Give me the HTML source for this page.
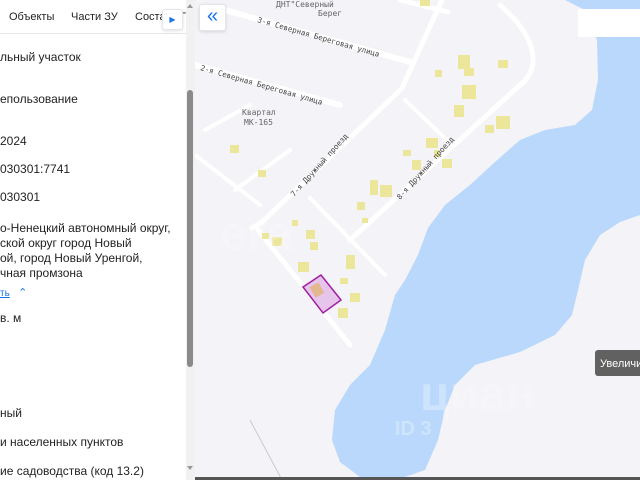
<!DOCTYPE html>
<html><head><meta charset="utf-8"><style>
*{margin:0;padding:0;box-sizing:border-box}
body{width:640px;height:480px;overflow:hidden;position:relative;background:#f3f3f8;font-family:"Liberation Sans",sans-serif}
#map{position:absolute;left:0;top:0}
#panel{position:absolute;left:0;top:0;width:186px;height:480px;background:#fff;overflow:hidden}
#tabs{height:34px;border-bottom:1px solid #e4e6ea;position:relative;font-size:11px;color:#222}
#tabs span{position:absolute;top:11px;white-space:nowrap}
.t{position:absolute;left:0;font-size:12px;color:#222;white-space:nowrap}
#sb{position:absolute;left:186px;top:0;width:9px;height:480px;background:#f1f1f1}
#thumb{position:absolute;left:187px;top:90px;width:6px;height:277px;background:#8a8a8a;border-radius:3px}
.btn{position:absolute;background:#fff;border:1px solid #e3e6ec;border-radius:3px;box-shadow:0 1px 3px rgba(0,0,0,.12)}
</style></head><body>
<svg id="map" width="640" height="480" viewBox="0 0 640 480">
<rect width="640" height="480" fill="#f3f3f8"/>
<polygon points="565,0 585,10 597,40 598,80 592,110 575,125 545,130 520,140 495,162 470,185 445,205 428,228 418,255 405,280 395,295 385,330 370,365 350,385 335,410 332,440 340,462 360,477 405,477 425,470 438,440 445,410 455,385 475,365 520,352 555,335 572,315 578,290 585,260 600,235 620,222 640,215 640,0" fill="#b9d8fb"/>
<g stroke="#fff" stroke-linecap="round" fill="none">
<path d="M225,10 L410,62" stroke-width="6"/>
<path d="M195,65 L340,105" stroke-width="6"/>
<path d="M400,0 L448,12" stroke-width="5"/>
<path d="M442,0 L402,88 L395,95" stroke-width="5"/>
<path d="M395,95 L262,222 L252,228" stroke-width="5"/>
<path d="M258,230 L350,345" stroke-width="5"/>
<path d="M500,5 C540,40 540,70 520,85 L350,240" stroke-width="5"/>
<path d="M405,100 L450,143" stroke-width="4"/>
<path d="M310,198 L385,275" stroke-width="4"/>
<path d="M195,155 L260,205" stroke-width="4"/>
<path d="M205,130 L250,105" stroke-width="4"/>
<path d="M235,190 L290,150" stroke-width="4"/>
</g>
<path d="M250,420 L282,480" stroke="#c8c8d0" stroke-width="1" fill="none"/>
<g fill="#ece69a">
<rect x="230" y="145" width="9" height="8"/><rect x="258" y="170" width="8" height="7"/>
<rect x="262" y="233" width="7" height="6"/><rect x="272" y="237" width="10" height="9"/><rect x="298" y="262" width="11" height="10"/>
<rect x="306" y="230" width="9" height="9"/><rect x="310" y="242" width="8" height="8"/><rect x="292" y="220" width="6" height="6"/>
<rect x="350" y="293" width="10" height="9"/><rect x="338" y="308" width="10" height="10"/><rect x="346" y="255" width="9" height="14"/><rect x="340" y="278" width="8" height="6"/>
<rect x="357" y="202" width="8" height="8"/><rect x="370" y="180" width="8" height="15"/><rect x="380" y="185" width="12" height="12"/>
<rect x="362" y="218" width="6" height="5"/><rect x="403" y="150" width="8" height="6"/><rect x="412" y="160" width="9" height="10"/><rect x="426" y="138" width="12" height="10"/>
<rect x="434" y="150" width="6" height="7"/><rect x="458" y="55" width="12" height="14"/><rect x="464" y="68" width="10" height="8"/><rect x="462" y="85" width="14" height="14"/>
<rect x="454" y="105" width="10" height="12"/><rect x="435" y="70" width="7" height="7"/><rect x="485" y="125" width="9" height="8"/><rect x="496" y="116" width="14" height="13"/>
<rect x="498" y="60" width="10" height="8"/><rect x="420" y="0" width="10" height="6"/><rect x="442" y="159" width="10" height="9"/>
</g>
<polygon points="303,287 321,275 341,300 323,313" fill="#e7c4ec" stroke="#a020a0" stroke-width="1.5"/>
<rect x="312" y="284" width="10" height="12" fill="#e3b88f" transform="rotate(-30 317 290)"/>
<g font-family="DejaVu Sans Mono,monospace" font-size="7.5" fill="#444">
<text x="257" y="22" transform="rotate(16 257 22)">3-я Северная Береговая улица</text>
<text x="200" y="70" transform="rotate(16 200 70)">2-я Северная Береговая улица</text>
<text x="294" y="197" transform="rotate(-48 294 197)">7-я Дружный проезд</text>
<text x="400" y="200" transform="rotate(-48 400 200)">8-я Дружный проезд</text>
<text x="276" y="7" fill="#666" font-size="8">ДНТ"Северный</text>
<text x="318" y="16" fill="#666" font-size="8">Берег</text>
<text x="242" y="115" fill="#666" font-size="8">Квартал</text>
<text x="244" y="125" fill="#666" font-size="8">МК-165</text>
</g>
<g fill="#fff" opacity="0.3" font-family="Liberation Sans,sans-serif" font-weight="bold">
<text x="420" y="410" font-size="48">циан</text>
<text x="395" y="435" font-size="20">ID 3</text>
<text x="220" y="250" font-size="48">era</text>
</g>
<rect x="578" y="9" width="62" height="28" fill="#fff"/>
<rect x="595" y="350" width="50" height="26" rx="3" fill="#616161"/>
<text x="600" y="367" font-size="11" fill="#fff" font-family="Liberation Sans,sans-serif">Увеличить</text>
<rect x="0" y="477" width="640" height="3" fill="#555"/>
</svg>
<div id="panel">
<div id="tabs"><span style="left:9px">Объекты</span><span style="left:71px">Части ЗУ</span><span style="left:135px">Соста</span><span style="left:180px">Г</span></div>
<div class="t" style="top:50px">льный участок</div>
<div class="t" style="top:92px">епользование</div>
<div class="t" style="top:134px">2024</div>
<div class="t" style="top:162px">030301:7741</div>
<div class="t" style="top:190px">030301</div>
<div class="t" style="top:221px">о-Ненецкий автономный округ,</div>
<div class="t" style="top:236px">ской округ город Новый</div>
<div class="t" style="top:251px">ой, город Новый Уренгой,</div>
<div class="t" style="top:266px">чная промзона</div>
<div class="t" style="top:286px;font-size:10px;color:#1a73e8"><u>ть</u>&nbsp;&nbsp;&nbsp;<span style="font-size:11px">&#8963;</span></div>
<div class="t" style="top:311px">в. м</div>
<div class="t" style="top:406px">ный</div>
<div class="t" style="top:435px">и населенных пунктов</div>
<div class="t" style="top:464px">ие садоводства (код 13.2)</div>
</div>
<div class="btn" style="left:162px;top:9px;width:21px;height:21px;color:#1a73e8;font-size:8px;text-align:center;line-height:20px">&#9654;</div>
<div id="sb"></div>
<div id="thumb"></div>
<div style="position:absolute;left:187px;top:4px;width:0;height:0;border-left:3px solid transparent;border-right:3px solid transparent;border-bottom:4px solid #999"></div>
<div style="position:absolute;left:187px;top:466px;width:0;height:0;border-left:3px solid transparent;border-right:3px solid transparent;border-top:4px solid #999"></div>
<div class="btn" style="left:199px;top:4px;width:27px;height:27px;color:#1a73e8;font-size:20px;text-align:center;line-height:22px">«</div>
</body></html>
